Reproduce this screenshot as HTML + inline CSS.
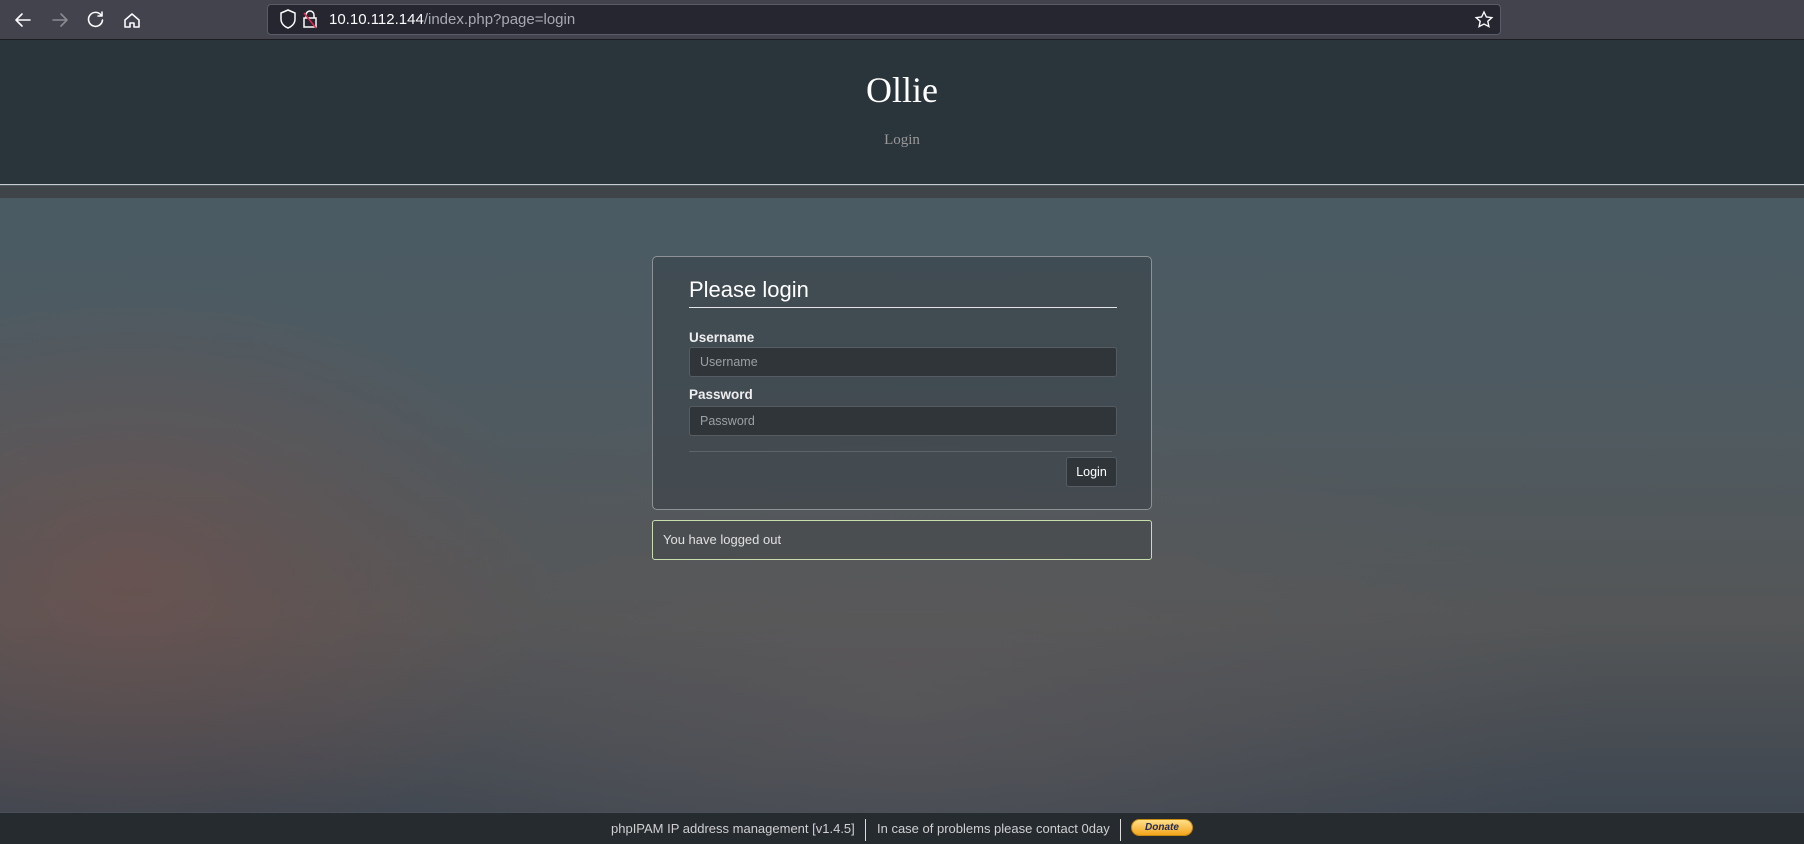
<!DOCTYPE html>
<html><head><meta charset="utf-8"><style>
*{box-sizing:border-box;margin:0;padding:0}
body{width:1804px;height:844px;overflow:hidden;font-family:"Liberation Sans",sans-serif;position:relative;
background:radial-gradient(ellipse 420px 300px at 130px 580px,rgba(120,80,75,.55),transparent),
radial-gradient(ellipse 700px 300px at 900px 700px,rgba(95,90,92,.6),transparent),
linear-gradient(180deg,#4a5b64 198px,#4f5a60 420px,#545657 620px,#3e4650 812px);}
.bar{position:absolute;left:0;top:0;width:1804px;height:40px;background:#42434d;border-bottom:1px solid #1c1c22}
.url{position:absolute;left:267px;top:4px;width:1234px;height:31px;background:#25262f;border:1px solid #5a5b66;border-radius:4px}
.url span{position:absolute;left:61px;top:6px;font-size:15px;color:#fbfbfe}
.url span i{font-style:normal;color:#a8a9b3}
.hdr{position:absolute;left:0;top:40px;width:1804px;height:145px;background:#2a343b;border-bottom:1px solid #c9cbcd}
.band{position:absolute;left:0;top:186px;width:1804px;height:12px;background:#3f4448}
.hdr h1{position:absolute;left:0;width:100%;top:29px;text-align:center;font:normal 36px "Liberation Serif",serif;color:#fff}
.hdr p{position:absolute;left:0;width:100%;top:92px;text-align:center;font:15px "Liberation Serif",serif;color:#999}
.box{position:absolute;left:652px;top:256px;width:500px;height:254px;border:1px solid #8c9296;border-radius:5px;background:rgba(50,58,64,.45)}
.box h2{position:absolute;left:36px;top:20px;width:428px;height:31px;border-bottom:1px solid #e4e4e4;font-weight:normal;font-size:22px;color:#fff}
.lbl{position:absolute;left:36px;font-weight:bold;font-size:13.5px;color:#eee}
.inp{position:absolute;left:36px;width:428px;height:30px;background:#2f3539;border:1px solid #565d62;border-radius:3px;color:#9aa0a4;font-size:12.5px;padding:7px 10px}
.hr{position:absolute;left:36px;top:194px;width:423px;border-top:1px solid #5e6468}
.btn{position:absolute;left:413px;top:200px;width:51px;height:30px;background:#2f3539;border:1px solid #565d62;border-radius:3px;color:#fff;font-size:12.5px;text-align:center;line-height:28px}
.alert{position:absolute;left:652px;top:520px;width:500px;height:40px;border:1px solid #c8dcae;border-radius:3px;background:rgba(60,64,66,.4);color:#e0e0e0;font-size:13px;padding:11px 10px}
.ft{position:absolute;left:0;top:812px;width:1804px;height:32px;background:#262b30;border-top:1px solid #4a5058;color:#d0d0d0;font-size:13px}
.ft span{position:absolute;top:8px;white-space:nowrap}
.sep{position:absolute;top:6px;width:1px;height:22px;background:#ddd}
.don{position:absolute;left:1131px;top:6px;width:62px;height:17px;border-radius:9px;background:linear-gradient(#ffe08a,#f4a51c);border:1px solid #c98a10;font:italic bold 10px "Liberation Sans",sans-serif;color:#1a2a5a;text-align:center;line-height:15px}
</style></head><body>
<div class="bar">
<svg width="260" height="40" style="position:absolute;left:0;top:0" fill="none" stroke-width="1.6" stroke-linecap="round" stroke-linejoin="round">
<path d="M30 20H16M22 14l-6 6 6 6" stroke="#fbfbfe"/>
<path d="M53 20h14M61 14l6 6-6 6" stroke="#8a8b93"/>
<path d="M101 15a7 7 0 1 0 1.5 5M102 12v4h-4" stroke="#fbfbfe"/>
<path d="M125 20l7-6 7 6v7h-5v-4h-4v4h-5z" stroke="#fbfbfe"/>
</svg>
<div class="url">
<svg width="50" height="30" style="position:absolute;left:4px;top:0" fill="none" stroke-width="1.5">
<path d="M9 8l7-3 7 3v6c0 5-4 8-7 9-3-1-7-4-7-9z" stroke="#fbfbfe"/>
<path d="M34 13v-3a4 4 0 0 1 8 0v3M32 13h12v9H32z" stroke="#fbfbfe"/>
<path d="M32 8l12 15" stroke="#e22850"/>
</svg>
<span>10.10.112.144<i>/index.php?page=login</i></span>
<svg width="20" height="20" style="position:absolute;right:6px;top:5px" fill="none" stroke="#fbfbfe" stroke-width="1.4"><path d="M10 2l2.4 5 5.4.6-4 3.7 1.1 5.3L10 14l-4.9 2.6 1.1-5.3-4-3.7 5.4-.6z"/></svg>
</div></div>
<div class="hdr"><h1>Ollie</h1><p>Login</p></div>
<div class="band"></div>
<div class="box">
<h2>Please login</h2>
<div class="lbl" style="top:73px">Username</div>
<div class="inp" style="top:90px">Username</div>
<div class="lbl" style="top:130px">Password</div>
<div class="inp" style="top:149px">Password</div>
<div class="hr"></div>
<div class="btn">Login</div>
</div>
<div class="alert">You have logged out</div>
<div class="ft">
<span style="left:611px">phpIPAM IP address management [v1.4.5]</span>
<div class="sep" style="left:865px"></div>
<span style="left:877px">In case of problems please contact 0day</span>
<div class="sep" style="left:1120px"></div>
<div class="don">Donate</div>
</div>
</body></html>
